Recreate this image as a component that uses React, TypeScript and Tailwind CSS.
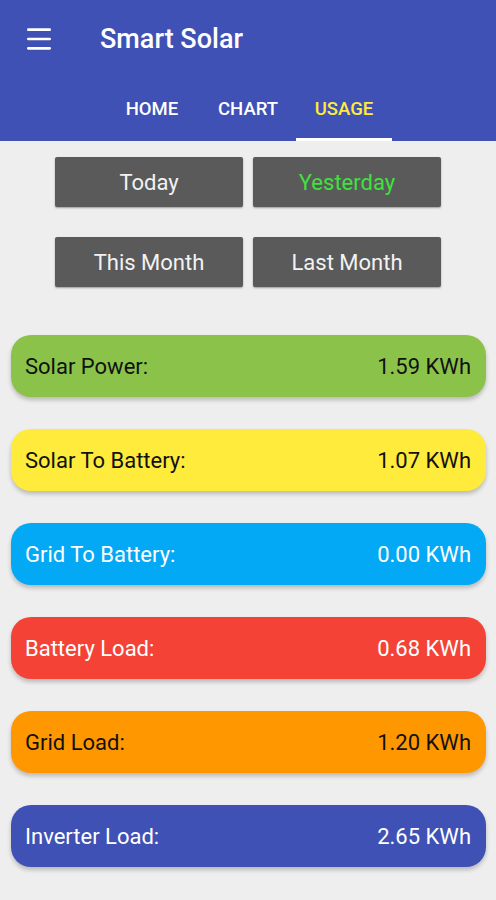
import { Menu } from 'lucide-react';

const periods = [
    { name: 'Today', active: false },
    { name: 'Yesterday', active: true },
    { name: 'This Month', active: false },
    { name: 'Last Month', active: false },
];

const usage = [
    { label: 'Solar Power:', value: '1.59 KWh', cls: 'bg-[#8bc34a] text-[#111]' },
    { label: 'Solar To Battery:', value: '1.07 KWh', cls: 'bg-[#ffeb3b] text-[#111]' },
    { label: 'Grid To Battery:', value: '0.00 KWh', cls: 'bg-[#03a9f4] text-white' },
    { label: 'Battery Load:', value: '0.68 KWh', cls: 'bg-[#f44336] text-white' },
    { label: 'Grid Load:', value: '1.20 KWh', cls: 'bg-[#ff9800] text-[#111]' },
    { label: 'Inverter Load:', value: '2.65 KWh', cls: 'bg-[#3f51b5] text-white' },
];

const tabs = ['HOME', 'CHART', 'USAGE'];

export default function App() {
    return (
        <div className="min-h-[900px] bg-[#eeeeee] font-['Roboto',sans-serif]">
            <header className="bg-[#3f51b5] text-white">
                <div className="flex h-[78px] items-center">
                    <Menu size={32} strokeWidth={2} className="ml-[23px]" />
                    <h1 className="ml-[45px] text-[27px] font-medium">Smart Solar</h1>
                </div>
                <nav className="flex h-[63px] justify-center">
                    {tabs.map((t) => {
                        const active = t === 'USAGE';
                        return (
                            <div
                                key={t}
                                className={`flex w-[96px] items-center justify-center border-b-[3px] pt-[3px] text-[18.5px] font-medium ${active ? 'border-white text-[#ffeb3b]' : 'border-transparent text-white'
                                    }`}
                            >
                                {t}
                            </div>
                        );
                    })}
                </nav>
            </header>

            <div className="mx-auto mt-[16px] grid w-[386px] grid-cols-2 gap-x-[10px] gap-y-[30px]">
                {periods.map((p) => (
                    <button
                        key={p.name}
                        className={`h-[50px] rounded-[2px] bg-[#5a5a5a] text-[22px] shadow-[0_1px_2px_rgba(0,0,0,0.35)] ${p.active ? 'text-[#3ee23e]' : 'text-[#f2f2f2]'
                            }`}
                    >
                        {p.name}
                    </button>
                ))}
            </div>

            <div className="ml-[11px] mr-[10px] mt-[48px] flex flex-col gap-[32px] pb-[30px]">
                {usage.map((u) => (
                    <div
                        key={u.label}
                        className={`flex h-[62px] items-center justify-between rounded-[20px] pl-[14px] pr-[15px] text-[22px] shadow-[0_3px_4px_rgba(0,0,0,0.22)] ${u.cls}`}
                    >
                        <span>{u.label}</span>
                        <span>{u.value}</span>
                    </div>
                ))}
            </div>
        </div>
    );
}
